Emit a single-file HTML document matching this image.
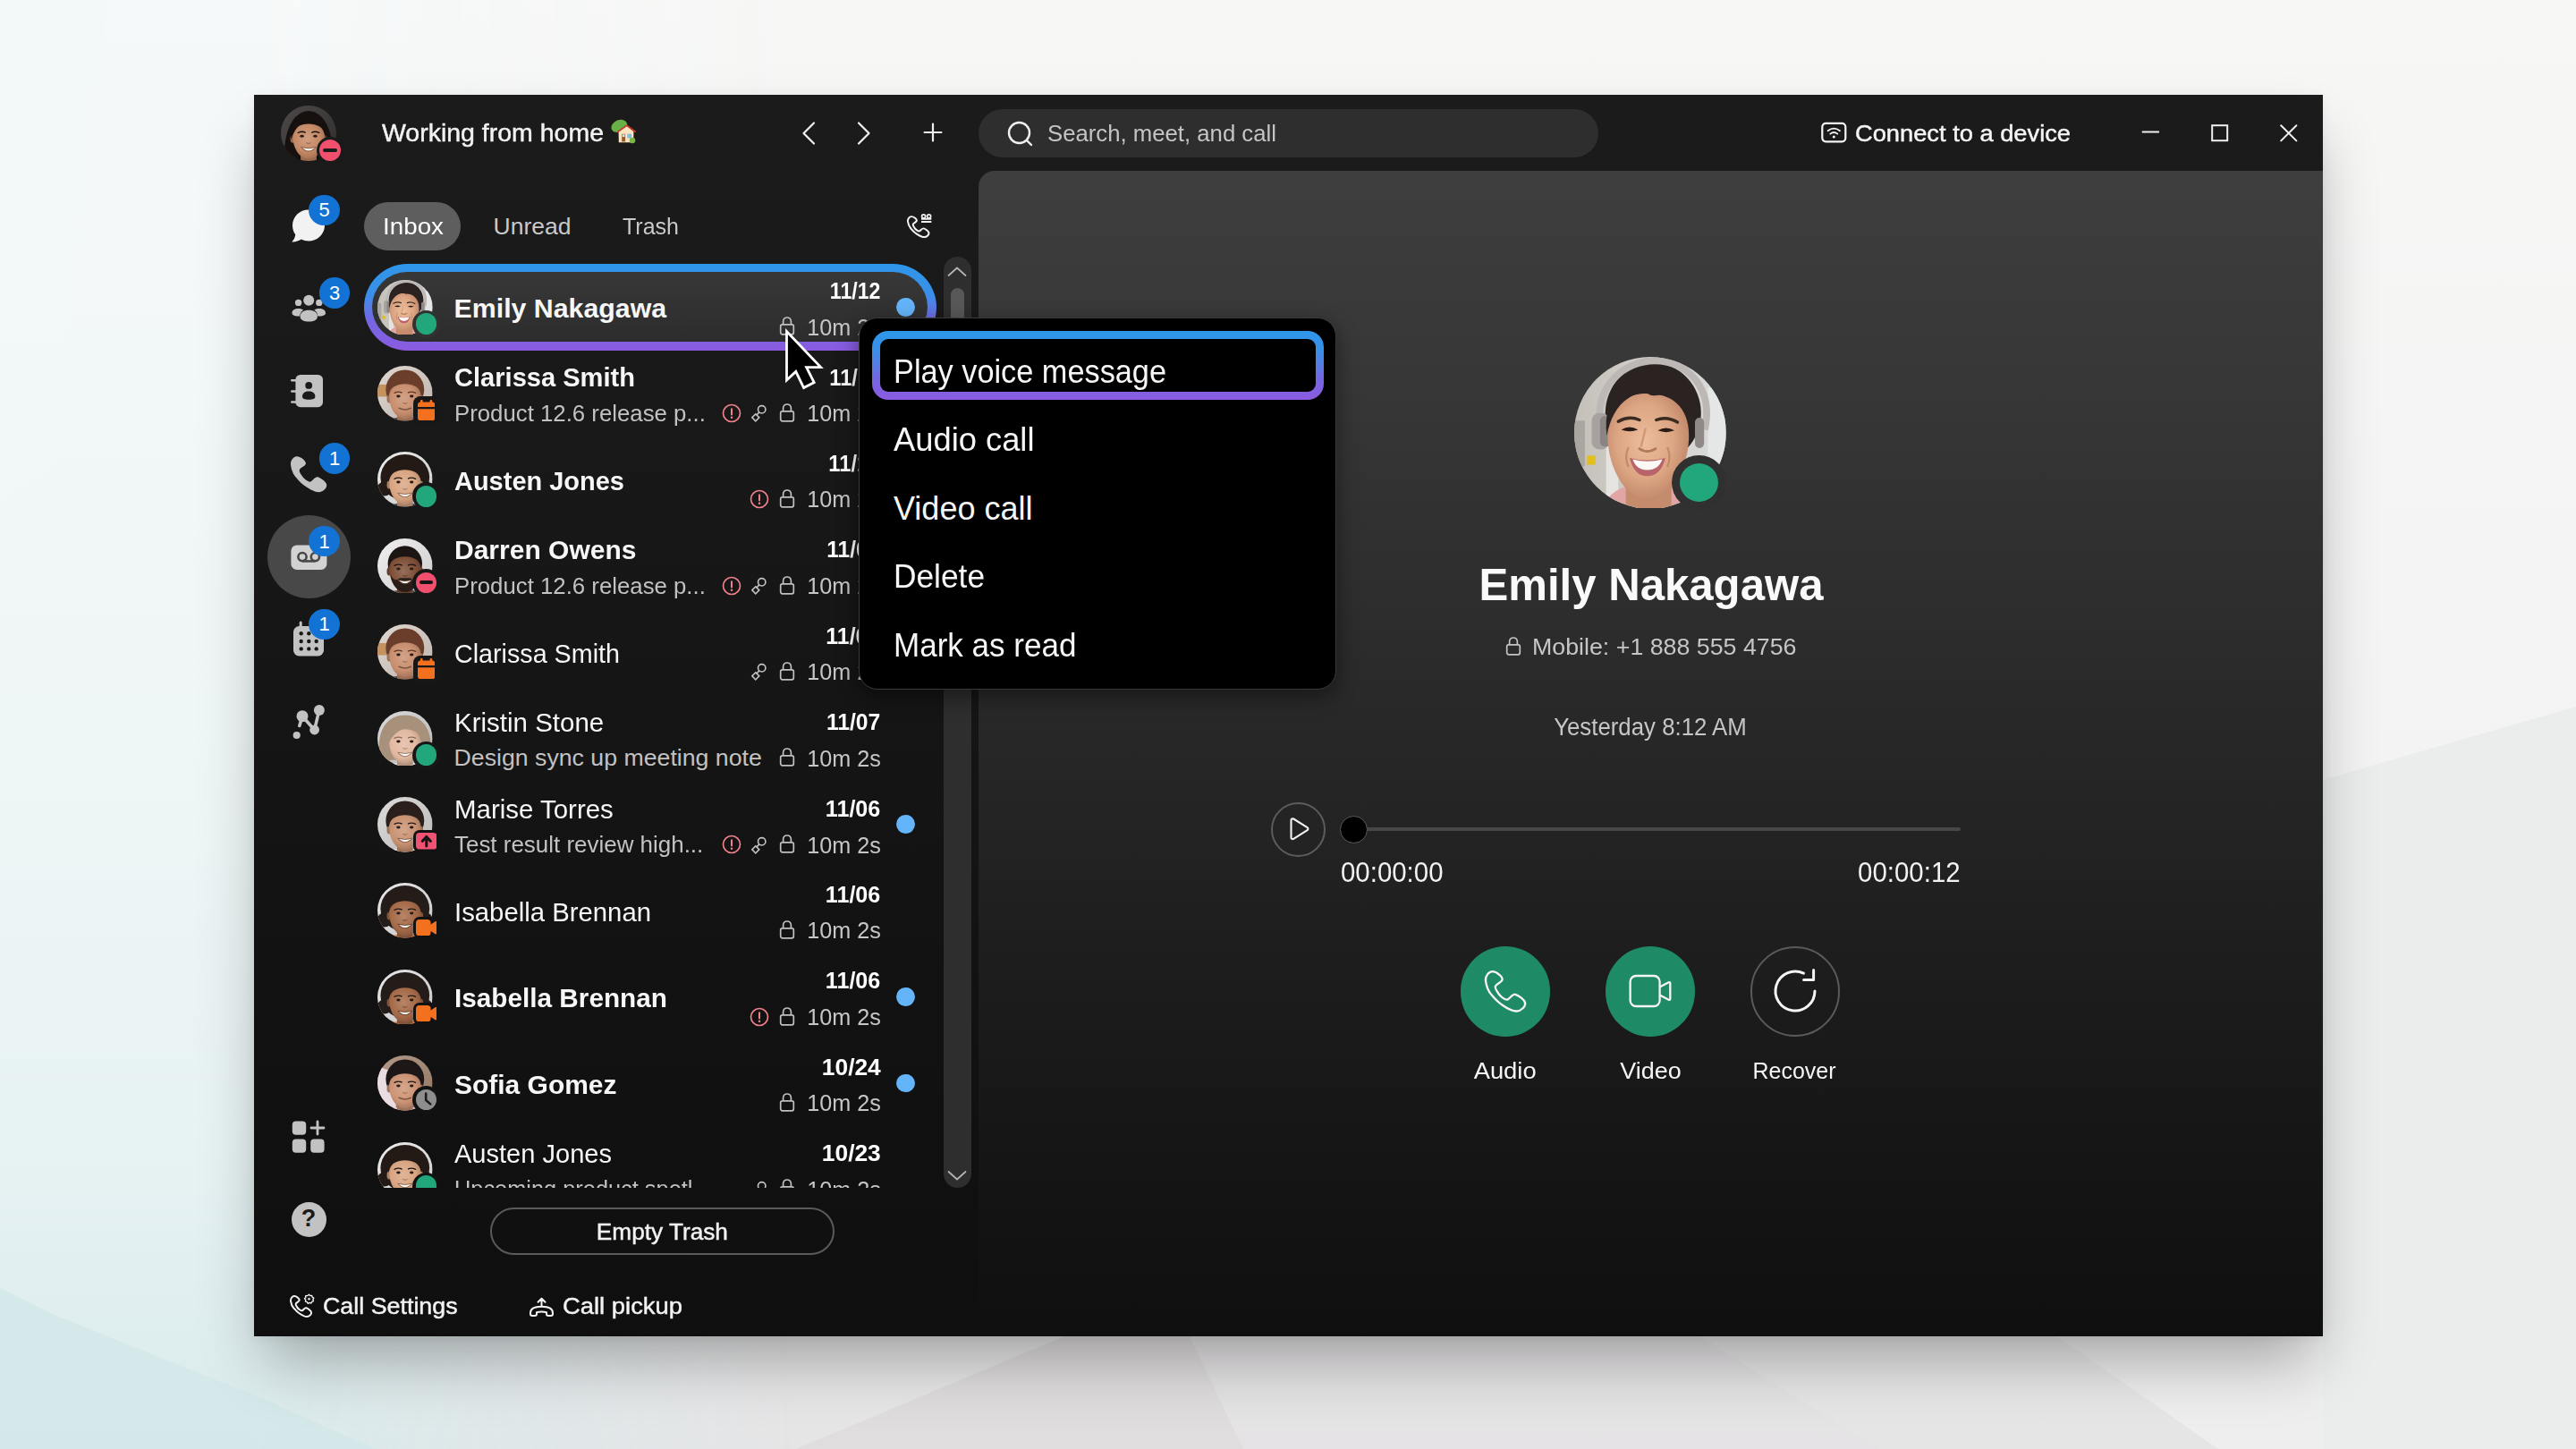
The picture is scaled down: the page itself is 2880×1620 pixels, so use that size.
<!DOCTYPE html>
<html lang="en"><head><meta charset="utf-8"><title>Webex - Voicemail</title>
<style>
html,body{margin:0;padding:0;}
body{width:2880px;height:1620px;overflow:hidden;position:relative;background:#e9eaea;font-family:"Liberation Sans",sans-serif;}
.m{-webkit-text-stroke:.45px currentColor;}
.t{position:absolute;white-space:nowrap;line-height:1;font-family:"Liberation Sans",sans-serif;}
#bg{position:absolute;left:0;top:0;width:2880px;height:1620px;}
#win{position:absolute;left:284px;top:106px;width:2313px;height:1388px;background:linear-gradient(180deg,#1b1b1b 0%,#181818 30%,#121212 70%,#0f0f0f 100%);box-shadow:0 38px 66px -12px rgba(0,0,0,.31),0 2px 12px rgba(0,0,0,.05);}
#root{position:absolute;left:0;top:0;width:2880px;height:1620px;}
</style></head><body>
<svg id="bg" width="2880" height="1620" viewBox="0 0 2880 1620">
<defs>
<linearGradient id="bgv" x1="0" y1="0" x2="0" y2="1"><stop offset="0" stop-color="#f7f7f6"/><stop offset=".55" stop-color="#f3f3f3"/><stop offset=".9" stop-color="#ebeaeb"/><stop offset="1" stop-color="#e6e5e6"/></linearGradient>
<linearGradient id="bglv" x1="0" y1="0" x2="0" y2="1"><stop offset="0" stop-color="#f6f9f9"/><stop offset=".5" stop-color="#eff6f6"/><stop offset=".8" stop-color="#e7f2f3"/><stop offset="1" stop-color="#d9eaec"/></linearGradient>
<linearGradient id="bglm" x1="0" y1="0" x2="1" y2="0"><stop offset="0" stop-color="#fff"/><stop offset=".3" stop-color="#fff"/><stop offset="1" stop-color="#fff" stop-opacity="0"/></linearGradient>
<mask id="mL"><rect x="0" y="0" width="900" height="1620" fill="url(#bglm)"/></mask>
</defs>
<rect width="2880" height="1620" fill="url(#bgv)"/>
<rect x="0" y="0" width="900" height="1620" fill="url(#bglv)" mask="url(#mL)"/>
<polygon points="2597,872 2880,790 2880,1620 2597,1620" fill="#ebecec"/>
<polygon points="2300,1494 2597,1494 2597,1620 2480,1620" fill="#eeeeee"/>
<polygon points="1190,1494 1330,1494 1390,1620 890,1620" fill="#dcdadb" opacity=".75"/>
<polygon points="1330,1494 1900,1494 2100,1620 1390,1620" fill="#e4e2e4" opacity=".7"/>
<polygon points="0,1440 60,1470 284,1560 420,1620 0,1620" fill="#d3e7e9" opacity=".8"/>
<polygon points="0,0 120,0 60,520 0,560" fill="#f2f8f8" opacity=".7"/>
</svg>
<div id="root">
<div id="win"></div>
<svg style="position:absolute;left:314.0px;top:118.0px;" width="62" height="62" viewBox="0 0 100 100" fill="none"><defs><clipPath id="cme"><circle cx="50" cy="50" r="50"/></clipPath><radialGradient id="gme" cx=".45" cy=".42" r=".65"><stop offset="0" stop-color="#d09f81"/><stop offset=".6" stop-color="#c68a66"/><stop offset="1" stop-color="#9a6b4f"/></radialGradient><linearGradient id="bme" x1="0" y1="0" x2="1" y2="1"><stop offset="0" stop-color="#4e4a4a"/><stop offset="1" stop-color="#2e2b2b"/></linearGradient></defs><g clip-path="url(#cme)"><rect width="100" height="100" fill="url(#bme)"/><g transform="translate(50 60) scale(1.2) translate(-50 -52)"><path d="M14 100 C10 60 18 12 50 10 C82 12 90 60 86 100Z" fill="#16110f"/><path d="M4 104 C6 84 26 80 50 80 C74 80 94 84 96 104Z" fill="#0c0c0c"/><path d="M38 66 H62 V84 C56 90 44 90 38 84Z" fill="#9a6b4f"/><ellipse cx="26" cy="52" rx="3.5" ry="6" fill="#9a6b4f"/><ellipse cx="74" cy="52" rx="3.5" ry="6" fill="#9a6b4f"/><path d="M26 46 C26 24 74 24 74 46 C74 66 64 82 50 82 C36 82 26 66 26 46Z" fill="url(#gme)"/><path d="M24 54 C20 24 38 14 50 14 C62 14 80 24 76 54 C74 38 66 26 52 24 C40 26 28 36 24 54Z" fill="#16110f"/><path d="M34 43 Q40 40 45 42.5 M55 42.5 Q60 40 66 43" stroke="#130f0d" stroke-width="1.8" fill="none" stroke-linecap="round"/><ellipse cx="40" cy="48" rx="3" ry="1.9" fill="#2a1c16"/><ellipse cx="60" cy="48" rx="3" ry="1.9" fill="#2a1c16"/><path d="M47 58 Q50 60.5 53 58" stroke="#9a6b4f" stroke-width="1.6" fill="none" stroke-linecap="round"/><path d="M39 64.5 Q50 68 61 64.5 Q50 76 39 64.5Z" fill="#fbf7f4"/><path d="M39 64.5 Q50 68 61 64.5" stroke="#7a553f" stroke-width="1.2" fill="none"/><path d="M39 64.5 Q50 77 61 64.5" stroke="#8a6047" stroke-width="1.5" fill="none"/></g></g></svg>
<div style="position:absolute;left:353.6px;top:153.3px;width:30px;height:30px;border-radius:50%;background:#1a1a1a;"></div>
<div style="position:absolute;left:356.6px;top:156.3px;width:24px;height:24px;border-radius:50%;background:#f0506e;"></div>
<div style="position:absolute;left:360.68px;top:166.26000000000002px;width:15.84px;height:4.08px;border-radius:3px;background:#1a1a1a;"></div>
<span class="t m" style="left:427.0px;top:135.2px;font-size:27.5px;color:#f2f2f2;transform:scaleX(1.0358);transform-origin:0 50%;">Working from home</span>
<svg style="position:absolute;left:682px;top:132px;" width="30" height="30" viewBox="0 0 30 30" fill="none"><ellipse cx="10.3" cy="8.9" rx="9.2" ry="6.6" transform="rotate(-24 10.3 8.9)" fill="#69b049"/><path d="M9.6 15.2 L18.8 8.6 L26.4 15 L26.2 27.2 H9.8Z" fill="#fbe4c0"/><path d="M8.4 15.6 L18.8 8.2 L28.2 15.2" stroke="#c23b2e" stroke-width="1.7" stroke-linecap="round" stroke-linejoin="round"/><rect x="13.2" y="17.8" width="3.9" height="8.6" fill="#9b5a2e"/><rect x="13.8" y="18.3" width="2.7" height="2.7" fill="#cfe6f6"/><rect x="19.4" y="17.6" width="4.7" height="4.9" fill="#7dbde8"/><circle cx="25" cy="25" r="3.3" fill="#7ab648"/></svg>
<svg style="position:absolute;left:889.2px;top:131.5px;" width="34" height="34" viewBox="0 0 34 34" fill="none"><path d="M21 5.5 L9.5 17 L21 28.5" stroke="#f0f0f0" stroke-width="2.2" stroke-linecap="round" stroke-linejoin="round"/></svg>
<svg style="position:absolute;left:947.4px;top:131.5px;" width="34" height="34" viewBox="0 0 34 34" fill="none"><path d="M13 5.5 L24.5 17 L13 28.5" stroke="#f0f0f0" stroke-width="2.2" stroke-linecap="round" stroke-linejoin="round"/></svg>
<svg style="position:absolute;left:1030.2px;top:135.4px;" width="26" height="26" viewBox="0 0 26 26" fill="none"><path d="M13 3.6 V22.4 M3.6 13 H22.4" stroke="#f0f0f0" stroke-width="2.2" stroke-linecap="round"/></svg>
<div style="position:absolute;left:1093.5px;top:122px;width:693.5px;height:53.5px;border-radius:27px;background:#2e2e2e;"></div>
<svg style="position:absolute;left:1125px;top:134px;" width="32" height="32" viewBox="0 0 32 32" fill="none"><circle cx="14.5" cy="14.5" r="11.5" stroke="#f0f0f0" stroke-width="2.4"/><path d="M23 23 L28 28" stroke="#f0f0f0" stroke-width="2.4" stroke-linecap="round"/></svg>
<span class="t" style="left:1171.0px;top:135.8px;font-size:26.3px;color:#c4c4c4;transform:scaleX(0.9783);transform-origin:0 50%;">Search, meet, and call</span>
<svg style="position:absolute;left:2036px;top:136px;" width="30" height="26" viewBox="0 0 30 26" fill="none"><rect x="1.3" y="1.8" width="26" height="20.5" rx="4" stroke="#f5f5f5" stroke-width="2.2"/><circle cx="14.3" cy="17" r="1.5" fill="#f5f5f5"/><path d="M10.3 13.6 Q14.3 10.4 18.3 13.6" stroke="#f5f5f5" stroke-width="1.8" stroke-linecap="round"/><path d="M7.6 10.3 Q14.3 5 21 10.3" stroke="#f5f5f5" stroke-width="1.8" stroke-linecap="round"/></svg>
<span class="t m" style="left:2074.0px;top:135.7px;font-size:26.5px;color:#f5f5f5;transform:scaleX(1.0289);transform-origin:0 50%;">Connect to a device</span>
<svg style="position:absolute;left:2392px;top:136px;" width="24" height="24" viewBox="0 0 24 24" fill="none"><path d="M2.8 11.5 H22" stroke="#f0f0f0" stroke-width="2"/></svg>
<svg style="position:absolute;left:2470px;top:137px;" width="24" height="24" viewBox="0 0 24 24" fill="none"><rect x="3.2" y="3.2" width="17" height="17" stroke="#f0f0f0" stroke-width="2"/></svg>
<svg style="position:absolute;left:2547px;top:137px;" width="24" height="24" viewBox="0 0 24 24" fill="none"><path d="M3.2 3.2 L20.4 20.4 M20.4 3.2 L3.2 20.4" stroke="#f0f0f0" stroke-width="2" stroke-linecap="round"/></svg>
<svg style="position:absolute;left:322px;top:230px;" width="46" height="46" viewBox="0 0 46 46" fill="none"><path d="M23 4.5 C33 4.5 41 12.3 41 22 C41 31.7 33 39.5 23 39.5 C20 39.5 17.2 38.8 14.7 37.6 C12 39.6 8.5 40.6 4.3 40.4 C6.6 38.2 7.8 35.6 8.3 32.3 C6.2 29.4 5 25.8 5 22 C5 12.3 13 4.5 23 4.5Z" fill="#f2f2f2"/></svg>
<div style="position:absolute;left:345.3px;top:217.8px;width:34.6px;height:34.6px;border-radius:50%;background:#1273d4;"></div>
<span class="t" style="left:356.5px;top:224.4px;font-size:22px;color:#fff;">5</span>
<svg style="position:absolute;left:324px;top:326px;" width="44" height="38" viewBox="0 0 44 38" fill="none"><circle cx="21.2" cy="9.7" r="6" fill="#c2c2c2"/><circle cx="9.6" cy="12.4" r="3.7" fill="#c2c2c2"/><circle cx="32.8" cy="12.4" r="3.7" fill="#c2c2c2"/><path d="M2.5 24 C2.5 20.5 5.5 19 9.6 19 C12 19 14 19.6 15.2 20.6 C12.4 22.3 11.4 24.6 11.2 27.6 C6 27.6 2.5 26.6 2.5 24Z" fill="#c2c2c2"/><path d="M40 24 C40 20.5 37 19 32.8 19 C30.4 19 28.4 19.6 27.2 20.6 C30 22.3 31 24.6 31.2 27.6 C36.4 27.6 40 26.6 40 24Z" fill="#c2c2c2"/><path d="M11.6 28 C11.6 23 15.6 20.7 21.2 20.7 C26.8 20.7 30.9 23 30.9 28 C30.9 31.7 26.8 33.5 21.2 33.5 C15.6 33.5 11.6 31.7 11.6 28Z" fill="#c2c2c2"/></svg>
<div style="position:absolute;left:356.9px;top:310.1px;width:34.6px;height:34.6px;border-radius:50%;background:#1273d4;"></div>
<span class="t" style="left:368.1px;top:316.7px;font-size:22px;color:#fff;">3</span>
<svg style="position:absolute;left:324px;top:418px;" width="40" height="40" viewBox="0 0 40 40" fill="none"><rect x="6.4" y="1" width="30.6" height="36.2" rx="5.5" fill="#c2c2c2"/><rect x="1" y="6" width="8" height="2.6" rx="1.3" fill="#c2c2c2"/><rect x="1" y="18.2" width="8" height="2.6" rx="1.3" fill="#c2c2c2"/><rect x="1" y="30.2" width="8" height="2.6" rx="1.3" fill="#c2c2c2"/><circle cx="21.2" cy="12.9" r="3.9" fill="#1a1a1a"/><path d="M14 25.5 C14 21.5 17.2 19.6 21.2 19.6 C25.2 19.6 28.4 21.5 28.4 25.5 C28.4 27.6 25.8 28.7 21.2 28.7 C16.6 28.7 14 27.6 14 25.5Z" fill="#1a1a1a"/></svg>
<svg style="position:absolute;left:325.4px;top:510.0px;overflow:visible;" width="40.1" height="40.3" viewBox="0 0 40.1 40.3" fill="none"><g transform="translate(-3.80,-2.24) scale(0.8833,0.8611)"><path d="M12.2 2.8 C8 2.8 3.6 8 4.3 14 C5.5 22 8 27 11.3 30.5 C15 35 19 39.5 24.4 42.8 C29 46 35 49.6 40.1 49.4 C45 49.2 51 44 49.7 39.3 C49 36 42 30.5 38.4 29.7 C35.5 29 32.5 34 29.6 35.8 C26.5 36.5 21 32 19.1 28.8 C17 25.5 14.5 22.5 15.6 20 C17 17 23 15.5 23.5 12.2 C24 9 17 2.8 12.2 2.8 Z" fill="#c2c2c2"/></g></svg>
<div style="position:absolute;left:356.9px;top:495.0px;width:34.6px;height:34.6px;border-radius:50%;background:#1273d4;"></div>
<span class="t" style="left:368.1px;top:501.6px;font-size:22px;color:#fff;">1</span>
<div style="position:absolute;left:298.8px;top:576px;width:93px;height:93px;border-radius:50%;background:#484848;"></div>
<svg style="position:absolute;left:325px;top:609px;" width="41" height="29" viewBox="0 0 41 29" fill="none"><rect x=".4" y=".4" width="40" height="27.6" rx="6.5" fill="#d2d2d2"/><circle cx="13" cy="13.6" r="4.6" stroke="#484848" stroke-width="2.6"/><circle cx="27.4" cy="13.6" r="4.6" stroke="#484848" stroke-width="2.6"/><path d="M13 18.4 H27.4" stroke="#484848" stroke-width="2.6"/></svg>
<div style="position:absolute;left:345.4px;top:587.9px;width:34.6px;height:34.6px;border-radius:50%;background:#1273d4;"></div>
<span class="t" style="left:356.6px;top:594.5px;font-size:22px;color:#fff;">1</span>
<svg style="position:absolute;left:326px;top:693px;" width="38" height="42" viewBox="0 0 38 42" fill="none"><rect x="2" y="7" width="34" height="33.4" rx="6.5" fill="#c2c2c2"/><rect x="8.7" y="1.6" width="3" height="8" rx="1.5" fill="#c2c2c2"/><circle cx="10.7" cy="15.3" r="2.2" fill="#181818"/><circle cx="10.7" cy="24" r="2.2" fill="#181818"/><circle cx="10.7" cy="32.4" r="2.2" fill="#181818"/><circle cx="19.3" cy="15.3" r="2.2" fill="#181818"/><circle cx="19.3" cy="24" r="2.2" fill="#181818"/><circle cx="19.3" cy="32.4" r="2.2" fill="#181818"/><circle cx="27.7" cy="15.3" r="2.2" fill="#181818"/><circle cx="27.7" cy="24" r="2.2" fill="#181818"/><circle cx="27.7" cy="32.4" r="2.2" fill="#181818"/></svg>
<div style="position:absolute;left:345.4px;top:680.5px;width:34.6px;height:34.6px;border-radius:50%;background:#1273d4;"></div>
<span class="t" style="left:356.6px;top:687.1px;font-size:22px;color:#fff;">1</span>
<svg style="position:absolute;left:324px;top:786px;" width="42" height="42" viewBox="0 0 42 42" fill="none"><path d="M10.8 25.5 L14 14.7 L27.6 30 L32.9 7.9" stroke="#c2c2c2" stroke-width="3.6" stroke-linejoin="round" stroke-linecap="round"/><circle cx="32.9" cy="7.9" r="6" fill="#c2c2c2"/><circle cx="14" cy="14.7" r="6.5" fill="#c2c2c2"/><circle cx="27.6" cy="30" r="5.4" fill="#c2c2c2"/><circle cx="7.7" cy="36" r="4.1" fill="#c2c2c2"/></svg>
<svg style="position:absolute;left:326px;top:1252px;" width="38" height="38" viewBox="0 0 38 38" fill="none"><rect x=".8" y="1.4" width="15.4" height="15.4" rx="4" fill="#c2c2c2"/><rect x=".8" y="21.4" width="15.4" height="15.4" rx="4" fill="#c2c2c2"/><rect x="21.2" y="21.4" width="15.4" height="15.4" rx="4" fill="#c2c2c2"/><path d="M29 2 V16 M22 9 H36" stroke="#c2c2c2" stroke-width="2.8" stroke-linecap="round"/></svg>
<div style="position:absolute;left:325.5px;top:1343.5px;width:39px;height:39px;border-radius:50%;background:#c2c2c2;"></div>
<span class="t" style="left:336.8px;top:1349.1px;font-size:27px;color:#1a1a1a;font-weight:700;">?</span>
<svg style="position:absolute;left:325.1px;top:1448.9px;overflow:visible;" width="23.0" height="23.0" viewBox="0 0 23.0 23.0" fill="none"><g transform="translate(-2.18,-1.28) scale(0.5066,0.4915)"><path d="M12.2 2.8 C8 2.8 3.6 8 4.3 14 C5.5 22 8 27 11.3 30.5 C15 35 19 39.5 24.4 42.8 C29 46 35 49.6 40.1 49.4 C45 49.2 51 44 49.7 39.3 C49 36 42 30.5 38.4 29.7 C35.5 29 32.5 34 29.6 35.8 C26.5 36.5 21 32 19.1 28.8 C17 25.5 14.5 22.5 15.6 20 C17 17 23 15.5 23.5 12.2 C24 9 17 2.8 12.2 2.8 Z" stroke="#f2f2f2" stroke-width="4.01" stroke-linejoin="round"/></g></svg>
<svg style="position:absolute;left:339.1px;top:1445.5px;" width="13" height="13" viewBox="0 0 16 16" fill="none"><path d="M8 1.6 L9.6 3.3 L11.9 2.9 L12.4 5.2 L14.5 6.3 L13.4 8.4 L14.1 10.7 L11.9 11.5 L10.9 13.6 L8.7 12.8 L6.5 13.9 L5.3 11.8 L3 11.3 L3.4 9 L1.8 7.2 L3.5 5.6 L3.4 3.3 L5.7 3.3 Z" fill="#111" stroke="#f2f2f2" stroke-width="1.7" stroke-linejoin="round"/><circle cx="8" cy="7.8" r="1.5" fill="#f2f2f2"/></svg>
<span class="t m" style="left:361.2px;top:1446.8px;font-size:26.5px;color:#f2f2f2;transform:scaleX(1.0123);transform-origin:0 50%;">Call Settings</span>
<svg style="position:absolute;left:590.8px;top:1449px;" width="29" height="24" viewBox="0 0 29 24" fill="none"><path d="M14.5 11.5 V3.2 M10.5 6.8 L14.5 2.8 L18.5 6.8" stroke="#f2f2f2" stroke-width="2" stroke-linecap="round" stroke-linejoin="round"/><path d="M2 19 C2 13.6 8 11.8 14.5 11.8 C21 11.8 27 13.6 27 19 V20 C27 21.2 26.2 22 25 22 H22 C20.8 22 20 21.2 20 20 V18.2 C16.5 17.2 12.5 17.2 9 18.2 V20 C9 21.2 8.2 22 7 22 H4 C2.8 22 2 21.2 2 20 Z" stroke="#f2f2f2" stroke-width="2" stroke-linejoin="round"/></svg>
<span class="t m" style="left:628.7px;top:1446.8px;font-size:26.5px;color:#f2f2f2;transform:scaleX(1.0338);transform-origin:0 50%;">Call pickup</span>
<div style="position:absolute;left:548px;top:1350px;width:384.5px;height:53px;box-sizing:border-box;border:2px solid #5a5a5a;border-radius:27px;"></div>
<span class="t m" style="left:665.9px;top:1364.0px;font-size:26.5px;color:#f2f2f2;transform:scaleX(0.9883);transform-origin:50% 50%;">Empty Trash</span>
<div style="position:absolute;left:407px;top:225.8px;width:108px;height:54px;border-radius:27px;background:#5e5e5e;"></div>
<span class="t" style="left:427.5px;top:239.9px;font-size:26.5px;color:#fff;transform:scaleX(1.0489);transform-origin:0 50%;">Inbox</span>
<span class="t" style="left:551.6px;top:239.9px;font-size:26.5px;color:#c9c9c9;">Unread</span>
<span class="t" style="left:695.5px;top:239.9px;font-size:26.5px;color:#c9c9c9;transform:scaleX(0.9437);transform-origin:0 50%;">Trash</span>
<svg style="position:absolute;left:1015.1px;top:241.9px;overflow:visible;" width="23.4" height="23.1" viewBox="0 0 23.4 23.1" fill="none"><g transform="translate(-2.22,-1.28) scale(0.5154,0.4936)"><path d="M12.2 2.8 C8 2.8 3.6 8 4.3 14 C5.5 22 8 27 11.3 30.5 C15 35 19 39.5 24.4 42.8 C29 46 35 49.6 40.1 49.4 C45 49.2 51 44 49.7 39.3 C49 36 42 30.5 38.4 29.7 C35.5 29 32.5 34 29.6 35.8 C26.5 36.5 21 32 19.1 28.8 C17 25.5 14.5 22.5 15.6 20 C17 17 23 15.5 23.5 12.2 C24 9 17 2.8 12.2 2.8 Z" stroke="#f2f2f2" stroke-width="3.96" stroke-linejoin="round"/></g></svg>
<svg style="position:absolute;left:1028px;top:237px;" width="16" height="14" viewBox="0 0 16 14" fill="none"><circle cx="4.6" cy="4.9" r="2" stroke="#f2f2f2" stroke-width="1.7"/><circle cx="10.6" cy="4.9" r="2" stroke="#f2f2f2" stroke-width="1.7"/><path d="M2 7.8 H13.3 M2 11 H13.3" stroke="#f2f2f2" stroke-width="1.8"/></svg>
<div style="position:absolute;left:1054.8px;top:287px;width:31.2px;height:1041px;border-radius:15.6px;background:#2e2e2e;"></div>
<div style="position:absolute;left:1062.6px;top:321.7px;width:15.6px;height:400px;border-radius:7.8px;background:#585858;"></div>
<svg style="position:absolute;left:1058px;top:296px;" width="24" height="16" viewBox="0 0 24 16" fill="none"><path d="M2.5 12 L12 3.5 L21.5 12" stroke="#b5b5b5" stroke-width="1.7" stroke-linecap="round" stroke-linejoin="round"/></svg>
<svg style="position:absolute;left:1058px;top:1306px;" width="24" height="16" viewBox="0 0 24 16" fill="none"><path d="M2.5 4 L12 12.5 L21.5 4" stroke="#b5b5b5" stroke-width="1.7" stroke-linecap="round" stroke-linejoin="round"/></svg>
<div style="position:absolute;left:400px;top:287px;width:654px;height:1041px;overflow:hidden;"><div style="position:absolute;left:-400px;top:-287px;width:2880px;height:1620px;">
<div style="position:absolute;left:407px;top:294.7px;width:639.5px;height:96.9px;border-radius:48.5px;background:linear-gradient(180deg,#2e97ea 0%,#3a8fe8 35%,#7467e3 65%,#8b5be0 100%);"></div>
<div style="position:absolute;left:416.2px;top:303.9px;width:621.1px;height:78.4px;border-radius:39.2px;background:linear-gradient(180deg,#383838 0%,#2c2c2c 100%);"></div>
<svg style="position:absolute;left:422.4px;top:312.6px;" width="61.6" height="61.6" viewBox="0 0 100 100" fill="none"><defs><clipPath id="cr0"><circle cx="50" cy="50" r="50"/></clipPath><radialGradient id="gr0" cx=".46" cy=".45" r=".62"><stop offset="0" stop-color="#ecbd9c"/><stop offset=".55" stop-color="#dda684"/><stop offset="1" stop-color="#b98063"/></radialGradient><linearGradient id="br0" x1="0" y1="0" x2="1" y2="0"><stop offset="0" stop-color="#c4c0b9"/><stop offset=".45" stop-color="#d2cfca"/><stop offset="1" stop-color="#d9dcda"/></linearGradient></defs><g clip-path="url(#cr0)"><rect width="100" height="100" fill="url(#br0)"/><rect x="21" y="58" width="8" height="42" fill="#e6e4e0"/><rect x="8.5" y="65" width="5.5" height="6" fill="#e3bf1c"/><rect x="0" y="42" width="7" height="30" fill="#a9a6a0"/><rect x="88" y="20" width="12" height="60" fill="#e4e7e6"/><ellipse cx="52" cy="37" rx="31.5" ry="33" fill="#2b2321"/><path d="M17 47 C13 18 34 2.5 53 2.5 C74 2.5 92 20 86 48" fill="none" stroke="#bdb8b5" stroke-width="4.6"/><rect x="11.5" y="37" width="11.5" height="24" rx="5" fill="#a7a29f"/><rect x="17" y="39" width="7" height="20" rx="3" fill="#8a8583"/><rect x="79.5" y="40" width="6" height="20" rx="3" fill="#8f8a88"/><path d="M18 104 C20 90 30 85 42 84 L70 86 C84 88 90 94 92 104Z" fill="#e2a5a6"/><path d="M34 80 H64 V100 H34Z" fill="#c48b6c"/><path d="M22 52 C22 32 34 24 48 24 C63 24 75.5 32 75.5 52 C75.5 74 62 94.5 48.5 94.5 C35 94.5 22 74 22 52Z" fill="url(#gr0)"/><path d="M21.5 52 C18 24 36 7 52 7 C69 7 83 22 77.5 52 C76.5 41 71 31 63 26.5 C57 23.5 51 27 49 24.5 C45 23 40 24 36 27 C28 32 23.5 41 21.5 52Z" fill="#2b2321"/><path d="M29 42.5 Q36 38.5 43 41.5 M54 41.5 Q61 38.8 68 43" stroke="#3a2a22" stroke-width="2" fill="none" stroke-linecap="round"/><path d="M31 48 Q36.5 44.6 42 48 Q36.5 50 31 48Z" fill="#2a1b15"/><path d="M55 48.5 Q60.5 45 66 48.5 Q60.5 50.6 55 48.5Z" fill="#2a1b15"/><path d="M43 60.5 Q48 64 53.5 60.5" stroke="#b37a5c" stroke-width="1.8" fill="none" stroke-linecap="round"/><path d="M47 47 Q45 55 44 59" stroke="#cf9776" stroke-width="1.4" fill="none"/><path d="M35.5 60 Q33 66 35.5 72 M61.5 60 Q64 66 61.5 72" stroke="#c08a6b" stroke-width="1.3" fill="none" stroke-linecap="round"/><path d="M36.5 66.5 Q48 69.5 60 66.5 Q57 78.5 48 78.5 Q39.5 78.5 36.5 66.5Z" fill="#b9646a"/><path d="M38.5 67.4 Q48 70 58 67.4 Q55.5 74.5 48 74.5 Q41 74.5 38.5 67.4Z" fill="#fbf8f5"/></g></svg>
<div style="position:absolute;left:461.0px;top:346.6px;width:31px;height:31px;border-radius:50%;background:#323232;"></div>
<div style="position:absolute;left:464.7px;top:350.3px;width:23.6px;height:23.6px;border-radius:50%;background:#22a67b;"></div>
<span class="t" style="left:507.6px;top:330.2px;font-size:30.3px;color:#f7f7f7;font-weight:700;">Emily Nakagawa</span>
<span class="t" style="left:919.0px;top:312.1px;font-size:26.7px;color:#fff;font-weight:700;transform:scaleX(0.8647);transform-origin:100% 50%;">11/12</span>
<span class="t" style="left:897.6px;top:352.5px;font-size:26.5px;color:#c6c6c6;transform:scaleX(0.9516);transform-origin:100% 50%;">10m 2s</span>
<svg style="position:absolute;left:871.1px;top:353.40000000000003px;" width="18" height="23" viewBox="0 0 18 23" fill="none"><rect x="1.7" y="9.8" width="14.6" height="11" rx="2" stroke="#c0c0c0" stroke-width="1.7"/><path d="M4.6 9.8 V6.4 C4.6 3.8 6.5 2 9 2 C11.5 2 13.4 3.8 13.4 6.4 V9.8" stroke="#c0c0c0" stroke-width="1.7"/></svg>
<div style="position:absolute;left:1001.9px;top:332.90000000000003px;width:20.8px;height:20.8px;border-radius:50%;background:#64b4fa;"></div>
<svg style="position:absolute;left:422.4px;top:409.0px;" width="61.6" height="61.6" viewBox="0 0 100 100" fill="none"><defs><clipPath id="cr1"><circle cx="50" cy="50" r="50"/></clipPath><radialGradient id="gr1" cx=".45" cy=".42" r=".65"><stop offset="0" stop-color="#d2a388"/><stop offset=".6" stop-color="#c98f6f"/><stop offset="1" stop-color="#9c6f56"/></radialGradient><linearGradient id="br1" x1="0" y1="0" x2="1" y2="1"><stop offset="0" stop-color="#e0d8d0"/><stop offset="1" stop-color="#bdb5ad"/></linearGradient></defs><g clip-path="url(#cr1)"><rect width="100" height="100" fill="url(#br1)"/><rect x="0" y="34" width="30" height="22" fill="#c4925f"/><g transform="translate(50 60) scale(1.2) translate(-50 -52)"><ellipse cx="50" cy="38" rx="29" ry="30" fill="#6a3e2b"/><path d="M4 104 C6 84 26 80 50 80 C74 80 94 84 96 104Z" fill="#3d3a55"/><path d="M38 66 H62 V84 C56 90 44 90 38 84Z" fill="#9c6f56"/><ellipse cx="26" cy="52" rx="3.5" ry="6" fill="#9c6f56"/><ellipse cx="74" cy="52" rx="3.5" ry="6" fill="#9c6f56"/><path d="M26 46 C26 24 74 24 74 46 C74 66 64 82 50 82 C36 82 26 66 26 46Z" fill="url(#gr1)"/><path d="M25 48 C21 22 38 12 50 12 C62 12 79 22 75 48 C72 32 62 26 50 26 C38 26 28 32 25 48Z" fill="#6a3e2b"/><path d="M34 43 Q40 40 45 42.5 M55 42.5 Q60 40 66 43" stroke="#5f3726" stroke-width="1.8" fill="none" stroke-linecap="round"/><ellipse cx="40" cy="48" rx="3" ry="1.9" fill="#2a1c16"/><ellipse cx="60" cy="48" rx="3" ry="1.9" fill="#2a1c16"/><path d="M47 58 Q50 60.5 53 58" stroke="#9c6f56" stroke-width="1.6" fill="none" stroke-linecap="round"/><path d="M41 66 Q50 70.5 59 66" stroke="#785542" stroke-width="2.2" fill="none" stroke-linecap="round"/></g></g></svg>
<div style="position:absolute;left:461.9px;top:443.3px;width:30px;height:31px;border-radius:8px;background:#171717;"></div>
<svg style="position:absolute;left:466.7px;top:446.7px;" width="19.6" height="23.6" viewBox="0 0 19.6 23.6" fill="none"><rect x="3" y="0" width="2.6" height="5" rx="1" fill="#f3701f"/><rect x="13.6" y="0" width="2.6" height="5" rx="1" fill="#f3701f"/><path d="M0 5.6 C0 3.6 1.4 2.4 3.2 2.4 H16.2 C18 2.4 19.4 3.6 19.4 5.6 V8 H0Z" fill="#f3701f"/><path d="M0 10.2 H19.4 V20 C19.4 22 18 23.4 16 23.4 H3.4 C1.4 23.4 0 22 0 20Z" fill="#f3701f"/></svg>
<span class="t" style="left:507.6px;top:407.3px;font-size:30.3px;color:#f7f7f7;font-weight:700;transform:scaleX(0.9596);transform-origin:0 50%;">Clarissa Smith</span>
<span class="t" style="left:507.6px;top:448.7px;font-size:26.7px;color:#c2c2c2;transform:scaleX(0.9659);transform-origin:0 50%;">Product 12.6 release p...</span>
<span class="t" style="left:920.4px;top:408.5px;font-size:26.7px;color:#fff;font-weight:700;transform:scaleX(0.8846);transform-origin:100% 50%;">11/11</span>
<span class="t" style="left:897.6px;top:448.9px;font-size:26.5px;color:#c6c6c6;transform:scaleX(0.9516);transform-origin:100% 50%;">10m 2s</span>
<svg style="position:absolute;left:871.1px;top:449.8px;" width="18" height="23" viewBox="0 0 18 23" fill="none"><rect x="1.7" y="9.8" width="14.6" height="11" rx="2" stroke="#c0c0c0" stroke-width="1.7"/><path d="M4.6 9.8 V6.4 C4.6 3.8 6.5 2 9 2 C11.5 2 13.4 3.8 13.4 6.4 V9.8" stroke="#c0c0c0" stroke-width="1.7"/></svg>
<svg style="position:absolute;left:838.6px;top:451.1px;" width="20" height="22" viewBox="0 0 20 22" fill="none"><circle cx="12.7" cy="6.8" r="4.2" stroke="#c4c4c4" stroke-width="1.6"/><path d="M9.8 9.9 L7 13" stroke="#c4c4c4" stroke-width="1.6"/><rect x="3" y="13" width="5.6" height="5.6" transform="rotate(45 5.8 15.8)" stroke="#c4c4c4" stroke-width="1.6"/></svg>
<svg style="position:absolute;left:806.9px;top:450.8px;" width="22" height="22" viewBox="0 0 22 22" fill="none"><circle cx="11" cy="11" r="9.5" stroke="#f0808c" stroke-width="1.7"/><path d="M11 6.2 V12.6" stroke="#f0808c" stroke-width="2" stroke-linecap="round"/><circle cx="11" cy="15.8" r="1.25" fill="#f0808c"/></svg>
<svg style="position:absolute;left:422.4px;top:505.4px;" width="61.6" height="61.6" viewBox="0 0 100 100" fill="none"><defs><clipPath id="cr2"><circle cx="50" cy="50" r="50"/></clipPath><radialGradient id="gr2" cx=".45" cy=".42" r=".65"><stop offset="0" stop-color="#dfb598"/><stop offset=".6" stop-color="#d9a582"/><stop offset="1" stop-color="#a98065"/></radialGradient><linearGradient id="br2" x1="0" y1="0" x2="1" y2="1"><stop offset="0" stop-color="#ededed"/><stop offset="1" stop-color="#cacaca"/></linearGradient></defs><g clip-path="url(#cr2)"><rect width="100" height="100" fill="url(#br2)"/><g transform="translate(50 60) scale(1.2) translate(-50 -52)"><ellipse cx="50" cy="41" rx="37" ry="35" fill="#231a15"/><circle cx="19" cy="58" r="11" fill="#231a15"/><circle cx="81" cy="58" r="11" fill="#231a15"/><path d="M4 104 C6 84 26 80 50 80 C74 80 94 84 96 104Z" fill="#2f3d55"/><path d="M38 66 H62 V84 C56 90 44 90 38 84Z" fill="#a98065"/><ellipse cx="26" cy="52" rx="3.5" ry="6" fill="#a98065"/><ellipse cx="74" cy="52" rx="3.5" ry="6" fill="#a98065"/><path d="M26 46 C26 24 74 24 74 46 C74 66 64 82 50 82 C36 82 26 66 26 46Z" fill="url(#gr2)"/><path d="M25 48 C22 24 38 16 50 16 C62 16 78 24 75 48 C72 34 62 27 50 27 C38 27 28 34 25 48Z" fill="#231a15"/><path d="M34 43 Q40 40 45 42.5 M55 42.5 Q60 40 66 43" stroke="#1f1712" stroke-width="1.8" fill="none" stroke-linecap="round"/><ellipse cx="40" cy="48" rx="3" ry="1.9" fill="#2a1c16"/><ellipse cx="60" cy="48" rx="3" ry="1.9" fill="#2a1c16"/><path d="M47 58 Q50 60.5 53 58" stroke="#a98065" stroke-width="1.6" fill="none" stroke-linecap="round"/><path d="M39 64.5 Q50 68 61 64.5 Q50 76 39 64.5Z" fill="#fbf7f4"/><path d="M39 64.5 Q50 68 61 64.5" stroke="#866650" stroke-width="1.2" fill="none"/><path d="M39 64.5 Q50 77 61 64.5" stroke="#97735b" stroke-width="1.5" fill="none"/></g></g></svg>
<div style="position:absolute;left:461.0px;top:539.4000000000001px;width:31px;height:31px;border-radius:50%;background:#171717;"></div>
<div style="position:absolute;left:464.7px;top:543.1000000000001px;width:23.6px;height:23.6px;border-radius:50%;background:#22a67b;"></div>
<span class="t" style="left:507.6px;top:523.0px;font-size:30.3px;color:#f7f7f7;font-weight:700;transform:scaleX(0.9563);transform-origin:0 50%;">Austen Jones</span>
<span class="t" style="left:919.0px;top:504.9px;font-size:26.7px;color:#fff;font-weight:700;transform:scaleX(0.8876);transform-origin:100% 50%;">11/10</span>
<span class="t" style="left:897.6px;top:545.3px;font-size:26.5px;color:#c6c6c6;transform:scaleX(0.9516);transform-origin:100% 50%;">10m 2s</span>
<svg style="position:absolute;left:871.1px;top:546.2px;" width="18" height="23" viewBox="0 0 18 23" fill="none"><rect x="1.7" y="9.8" width="14.6" height="11" rx="2" stroke="#c0c0c0" stroke-width="1.7"/><path d="M4.6 9.8 V6.4 C4.6 3.8 6.5 2 9 2 C11.5 2 13.4 3.8 13.4 6.4 V9.8" stroke="#c0c0c0" stroke-width="1.7"/></svg>
<svg style="position:absolute;left:837.6px;top:547.2px;" width="22" height="22" viewBox="0 0 22 22" fill="none"><circle cx="11" cy="11" r="9.5" stroke="#f0808c" stroke-width="1.7"/><path d="M11 6.2 V12.6" stroke="#f0808c" stroke-width="2" stroke-linecap="round"/><circle cx="11" cy="15.8" r="1.25" fill="#f0808c"/></svg>
<svg style="position:absolute;left:422.4px;top:601.8px;" width="61.6" height="61.6" viewBox="0 0 100 100" fill="none"><defs><clipPath id="cr3"><circle cx="50" cy="50" r="50"/></clipPath><radialGradient id="gr3" cx=".45" cy=".42" r=".65"><stop offset="0" stop-color="#966e5b"/><stop offset=".6" stop-color="#7f4f38"/><stop offset="1" stop-color="#633d2b"/></radialGradient><linearGradient id="br3" x1="0" y1="0" x2="1" y2="1"><stop offset="0" stop-color="#f0f0f0"/><stop offset="1" stop-color="#cccccc"/></linearGradient></defs><g clip-path="url(#cr3)"><rect width="100" height="100" fill="url(#br3)"/><g transform="translate(50 60) scale(1.2) translate(-50 -52)"><ellipse cx="50" cy="40" rx="26" ry="27" fill="#1b1513"/><path d="M4 104 C6 84 26 80 50 80 C74 80 94 84 96 104Z" fill="#4a4a4c"/><path d="M38 66 H62 V84 C56 90 44 90 38 84Z" fill="#633d2b"/><ellipse cx="26" cy="52" rx="3.5" ry="6" fill="#633d2b"/><ellipse cx="74" cy="52" rx="3.5" ry="6" fill="#633d2b"/><path d="M26 46 C26 24 74 24 74 46 C74 66 64 82 50 82 C36 82 26 66 26 46Z" fill="url(#gr3)"/><path d="M28 56 C30 74 40 83 50 83 C60 83 70 74 72 56 C68 66 62 66 58 62 H42 C38 66 32 66 28 56Z" fill="#1b1513" opacity=".85"/><path d="M25.5 46 C23 24 38 17 50 17 C62 17 77 24 74.5 46 C72 33 62 28 50 28 C38 28 28 33 25.5 46Z" fill="#1b1513"/><path d="M34 43 Q40 40 45 42.5 M55 42.5 Q60 40 66 43" stroke="#181211" stroke-width="1.8" fill="none" stroke-linecap="round"/><ellipse cx="40" cy="48" rx="3" ry="1.9" fill="#2a1c16"/><ellipse cx="60" cy="48" rx="3" ry="1.9" fill="#2a1c16"/><path d="M47 58 Q50 60.5 53 58" stroke="#633d2b" stroke-width="1.6" fill="none" stroke-linecap="round"/><path d="M39 64.5 Q50 68 61 64.5 Q50 76 39 64.5Z" fill="#fbf7f4"/><path d="M39 64.5 Q50 68 61 64.5" stroke="#4e3022" stroke-width="1.2" fill="none"/><path d="M39 64.5 Q50 77 61 64.5" stroke="#583727" stroke-width="1.5" fill="none"/></g></g></svg>
<div style="position:absolute;left:461.0px;top:635.8000000000001px;width:31px;height:31px;border-radius:50%;background:#171717;"></div>
<div style="position:absolute;left:464.7px;top:639.5000000000001px;width:23.6px;height:23.6px;border-radius:50%;background:#f0506e;"></div>
<div style="position:absolute;left:468.9px;top:649.3000000000001px;width:15.2px;height:4px;border-radius:2px;background:#151515;"></div>
<span class="t" style="left:507.6px;top:600.1px;font-size:30.3px;color:#f7f7f7;font-weight:700;transform:scaleX(0.9905);transform-origin:0 50%;">Darren Owens</span>
<span class="t" style="left:507.6px;top:641.5px;font-size:26.7px;color:#c2c2c2;transform:scaleX(0.9659);transform-origin:0 50%;">Product 12.6 release p...</span>
<span class="t" style="left:919.0px;top:601.3px;font-size:26.7px;color:#fff;font-weight:700;transform:scaleX(0.9182);transform-origin:100% 50%;">11/09</span>
<span class="t" style="left:897.6px;top:641.7px;font-size:26.5px;color:#c6c6c6;transform:scaleX(0.9516);transform-origin:100% 50%;">10m 2s</span>
<svg style="position:absolute;left:871.1px;top:642.6px;" width="18" height="23" viewBox="0 0 18 23" fill="none"><rect x="1.7" y="9.8" width="14.6" height="11" rx="2" stroke="#c0c0c0" stroke-width="1.7"/><path d="M4.6 9.8 V6.4 C4.6 3.8 6.5 2 9 2 C11.5 2 13.4 3.8 13.4 6.4 V9.8" stroke="#c0c0c0" stroke-width="1.7"/></svg>
<svg style="position:absolute;left:838.6px;top:643.9000000000001px;" width="20" height="22" viewBox="0 0 20 22" fill="none"><circle cx="12.7" cy="6.8" r="4.2" stroke="#c4c4c4" stroke-width="1.6"/><path d="M9.8 9.9 L7 13" stroke="#c4c4c4" stroke-width="1.6"/><rect x="3" y="13" width="5.6" height="5.6" transform="rotate(45 5.8 15.8)" stroke="#c4c4c4" stroke-width="1.6"/></svg>
<svg style="position:absolute;left:806.9px;top:643.6px;" width="22" height="22" viewBox="0 0 22 22" fill="none"><circle cx="11" cy="11" r="9.5" stroke="#f0808c" stroke-width="1.7"/><path d="M11 6.2 V12.6" stroke="#f0808c" stroke-width="2" stroke-linecap="round"/><circle cx="11" cy="15.8" r="1.25" fill="#f0808c"/></svg>
<svg style="position:absolute;left:422.4px;top:698.2px;" width="61.6" height="61.6" viewBox="0 0 100 100" fill="none"><defs><clipPath id="cr4"><circle cx="50" cy="50" r="50"/></clipPath><radialGradient id="gr4" cx=".45" cy=".42" r=".65"><stop offset="0" stop-color="#d2a388"/><stop offset=".6" stop-color="#c98f6f"/><stop offset="1" stop-color="#9c6f56"/></radialGradient><linearGradient id="br4" x1="0" y1="0" x2="1" y2="1"><stop offset="0" stop-color="#e0d8d0"/><stop offset="1" stop-color="#bdb5ad"/></linearGradient></defs><g clip-path="url(#cr4)"><rect width="100" height="100" fill="url(#br4)"/><rect x="0" y="34" width="30" height="22" fill="#c4925f"/><g transform="translate(50 60) scale(1.2) translate(-50 -52)"><ellipse cx="50" cy="38" rx="29" ry="30" fill="#6a3e2b"/><path d="M4 104 C6 84 26 80 50 80 C74 80 94 84 96 104Z" fill="#3d3a55"/><path d="M38 66 H62 V84 C56 90 44 90 38 84Z" fill="#9c6f56"/><ellipse cx="26" cy="52" rx="3.5" ry="6" fill="#9c6f56"/><ellipse cx="74" cy="52" rx="3.5" ry="6" fill="#9c6f56"/><path d="M26 46 C26 24 74 24 74 46 C74 66 64 82 50 82 C36 82 26 66 26 46Z" fill="url(#gr4)"/><path d="M25 48 C21 22 38 12 50 12 C62 12 79 22 75 48 C72 32 62 26 50 26 C38 26 28 32 25 48Z" fill="#6a3e2b"/><path d="M34 43 Q40 40 45 42.5 M55 42.5 Q60 40 66 43" stroke="#5f3726" stroke-width="1.8" fill="none" stroke-linecap="round"/><ellipse cx="40" cy="48" rx="3" ry="1.9" fill="#2a1c16"/><ellipse cx="60" cy="48" rx="3" ry="1.9" fill="#2a1c16"/><path d="M47 58 Q50 60.5 53 58" stroke="#9c6f56" stroke-width="1.6" fill="none" stroke-linecap="round"/><path d="M41 66 Q50 70.5 59 66" stroke="#785542" stroke-width="2.2" fill="none" stroke-linecap="round"/></g></g></svg>
<div style="position:absolute;left:461.9px;top:732.5px;width:30px;height:31px;border-radius:8px;background:#171717;"></div>
<svg style="position:absolute;left:466.7px;top:735.9000000000001px;" width="19.6" height="23.6" viewBox="0 0 19.6 23.6" fill="none"><rect x="3" y="0" width="2.6" height="5" rx="1" fill="#f3701f"/><rect x="13.6" y="0" width="2.6" height="5" rx="1" fill="#f3701f"/><path d="M0 5.6 C0 3.6 1.4 2.4 3.2 2.4 H16.2 C18 2.4 19.4 3.6 19.4 5.6 V8 H0Z" fill="#f3701f"/><path d="M0 10.2 H19.4 V20 C19.4 22 18 23.4 16 23.4 H3.4 C1.4 23.4 0 22 0 20Z" fill="#f3701f"/></svg>
<span class="t" style="left:507.6px;top:715.8px;font-size:30.3px;color:#f7f7f7;transform:scaleX(0.9472);transform-origin:0 50%;">Clarissa Smith</span>
<span class="t" style="left:919.0px;top:697.7px;font-size:26.7px;color:#fff;font-weight:700;transform:scaleX(0.9335);transform-origin:100% 50%;">11/08</span>
<span class="t" style="left:897.6px;top:738.1px;font-size:26.5px;color:#c6c6c6;transform:scaleX(0.9516);transform-origin:100% 50%;">10m 2s</span>
<svg style="position:absolute;left:871.1px;top:739.0px;" width="18" height="23" viewBox="0 0 18 23" fill="none"><rect x="1.7" y="9.8" width="14.6" height="11" rx="2" stroke="#c0c0c0" stroke-width="1.7"/><path d="M4.6 9.8 V6.4 C4.6 3.8 6.5 2 9 2 C11.5 2 13.4 3.8 13.4 6.4 V9.8" stroke="#c0c0c0" stroke-width="1.7"/></svg>
<svg style="position:absolute;left:838.6px;top:740.3000000000001px;" width="20" height="22" viewBox="0 0 20 22" fill="none"><circle cx="12.7" cy="6.8" r="4.2" stroke="#c4c4c4" stroke-width="1.6"/><path d="M9.8 9.9 L7 13" stroke="#c4c4c4" stroke-width="1.6"/><rect x="3" y="13" width="5.6" height="5.6" transform="rotate(45 5.8 15.8)" stroke="#c4c4c4" stroke-width="1.6"/></svg>
<svg style="position:absolute;left:422.4px;top:794.6px;" width="61.6" height="61.6" viewBox="0 0 100 100" fill="none"><defs><clipPath id="cr5"><circle cx="50" cy="50" r="50"/></clipPath><radialGradient id="gr5" cx=".45" cy=".42" r=".65"><stop offset="0" stop-color="#e8c5b2"/><stop offset=".6" stop-color="#e3b9a2"/><stop offset="1" stop-color="#b1907e"/></radialGradient><linearGradient id="br5" x1="0" y1="0" x2="1" y2="1"><stop offset="0" stop-color="#dadadc"/><stop offset="1" stop-color="#b8b8b9"/></linearGradient></defs><g clip-path="url(#cr5)"><rect width="100" height="100" fill="url(#br5)"/><g transform="translate(50 60) scale(1.2) translate(-50 -52)"><path d="M12 70 C6 30 24 8 50 8 C76 8 94 30 88 70 C86 80 76 82 72 76 L28 76 C24 82 14 80 12 70Z" fill="#a8917a"/><path d="M4 104 C6 84 26 80 50 80 C74 80 94 84 96 104Z" fill="#ebe6e0"/><path d="M38 66 H62 V84 C56 90 44 90 38 84Z" fill="#b1907e"/><ellipse cx="26" cy="52" rx="3.5" ry="6" fill="#b1907e"/><ellipse cx="74" cy="52" rx="3.5" ry="6" fill="#b1907e"/><path d="M26 46 C26 24 74 24 74 46 C74 66 64 82 50 82 C36 82 26 66 26 46Z" fill="url(#gr5)"/><path d="M24 56 C18 26 36 12 50 12 C64 12 82 26 76 56 C74 38 66 28 56 25 C46 30 30 34 24 56Z" fill="#a8917a"/><path d="M34 43 Q40 40 45 42.5 M55 42.5 Q60 40 66 43" stroke="#8a6f58" stroke-width="1.8" fill="none" stroke-linecap="round"/><ellipse cx="40" cy="48" rx="3" ry="1.9" fill="#2a1c16"/><ellipse cx="60" cy="48" rx="3" ry="1.9" fill="#2a1c16"/><path d="M47 58 Q50 60.5 53 58" stroke="#b1907e" stroke-width="1.6" fill="none" stroke-linecap="round"/><path d="M39 64.5 Q50 68 61 64.5 Q50 76 39 64.5Z" fill="#fbf7f4"/><path d="M39 64.5 Q50 68 61 64.5" stroke="#8c7264" stroke-width="1.2" fill="none"/><path d="M39 64.5 Q50 77 61 64.5" stroke="#9e8171" stroke-width="1.5" fill="none"/></g></g></svg>
<div style="position:absolute;left:461.0px;top:828.6px;width:31px;height:31px;border-radius:50%;background:#171717;"></div>
<div style="position:absolute;left:464.7px;top:832.3000000000001px;width:23.6px;height:23.6px;border-radius:50%;background:#22a67b;"></div>
<span class="t" style="left:507.6px;top:792.9px;font-size:30.3px;color:#f7f7f7;transform:scaleX(0.9739);transform-origin:0 50%;">Kristin Stone</span>
<span class="t" style="left:507.6px;top:834.3px;font-size:26.7px;color:#c2c2c2;">Design sync up meeting note</span>
<span class="t" style="left:919.0px;top:794.1px;font-size:26.7px;color:#fff;font-weight:700;transform:scaleX(0.9243);transform-origin:100% 50%;">11/07</span>
<span class="t" style="left:897.6px;top:834.5px;font-size:26.5px;color:#c6c6c6;transform:scaleX(0.9516);transform-origin:100% 50%;">10m 2s</span>
<svg style="position:absolute;left:871.1px;top:835.4px;" width="18" height="23" viewBox="0 0 18 23" fill="none"><rect x="1.7" y="9.8" width="14.6" height="11" rx="2" stroke="#c0c0c0" stroke-width="1.7"/><path d="M4.6 9.8 V6.4 C4.6 3.8 6.5 2 9 2 C11.5 2 13.4 3.8 13.4 6.4 V9.8" stroke="#c0c0c0" stroke-width="1.7"/></svg>
<svg style="position:absolute;left:422.4px;top:891.0px;" width="61.6" height="61.6" viewBox="0 0 100 100" fill="none"><defs><clipPath id="cr6"><circle cx="50" cy="50" r="50"/></clipPath><radialGradient id="gr6" cx=".45" cy=".42" r=".65"><stop offset="0" stop-color="#d2a68c"/><stop offset=".6" stop-color="#c99373"/><stop offset="1" stop-color="#9c7259"/></radialGradient><linearGradient id="br6" x1="0" y1="0" x2="1" y2="1"><stop offset="0" stop-color="#dddcda"/><stop offset="1" stop-color="#bab9b7"/></linearGradient></defs><g clip-path="url(#cr6)"><rect width="100" height="100" fill="url(#br6)"/><g transform="translate(50 60) scale(1.2) translate(-50 -52)"><ellipse cx="50" cy="38" rx="29" ry="30" fill="#2a1f1b"/><path d="M4 104 C6 84 26 80 50 80 C74 80 94 84 96 104Z" fill="#ece6de"/><path d="M38 66 H62 V84 C56 90 44 90 38 84Z" fill="#9c7259"/><ellipse cx="26" cy="52" rx="3.5" ry="6" fill="#9c7259"/><ellipse cx="74" cy="52" rx="3.5" ry="6" fill="#9c7259"/><path d="M26 46 C26 24 74 24 74 46 C74 66 64 82 50 82 C36 82 26 66 26 46Z" fill="url(#gr6)"/><path d="M25 48 C21 22 38 12 50 12 C62 12 79 22 75 48 C72 32 62 26 50 26 C38 26 28 32 25 48Z" fill="#2a1f1b"/><path d="M34 43 Q40 40 45 42.5 M55 42.5 Q60 40 66 43" stroke="#251b18" stroke-width="1.8" fill="none" stroke-linecap="round"/><ellipse cx="40" cy="48" rx="3" ry="1.9" fill="#2a1c16"/><ellipse cx="60" cy="48" rx="3" ry="1.9" fill="#2a1c16"/><path d="M47 58 Q50 60.5 53 58" stroke="#9c7259" stroke-width="1.6" fill="none" stroke-linecap="round"/><path d="M39 64.5 Q50 68 61 64.5 Q50 76 39 64.5Z" fill="#fbf7f4"/><path d="M39 64.5 Q50 68 61 64.5" stroke="#7c5b47" stroke-width="1.2" fill="none"/><path d="M39 64.5 Q50 77 61 64.5" stroke="#8c6650" stroke-width="1.5" fill="none"/></g></g></svg>
<div style="position:absolute;left:461.5px;top:928.1000000000001px;width:30px;height:24.8px;border-radius:7px;background:#121212;"></div>
<svg style="position:absolute;left:464.7px;top:931.3000000000001px;" width="23.6" height="18.4" viewBox="0 0 23.6 18.4" fill="none"><rect x="0" y="0" width="23.6" height="18.4" rx="4" fill="#ef5272"/><path d="M11.8 15 V6 M7.2 9.4 L11.8 4.4 L16.4 9.4" stroke="#141414" stroke-width="3" stroke-linecap="round" stroke-linejoin="round"/></svg>
<span class="t" style="left:507.6px;top:889.9px;font-size:30.3px;color:#f7f7f7;transform:scaleX(0.9717);transform-origin:0 50%;">Marise Torres</span>
<span class="t" style="left:507.6px;top:931.3px;font-size:26.7px;color:#c2c2c2;transform:scaleX(0.9721);transform-origin:0 50%;">Test result review high...</span>
<span class="t" style="left:919.0px;top:891.1px;font-size:26.7px;color:#fff;font-weight:700;transform:scaleX(0.9412);transform-origin:100% 50%;">11/06</span>
<span class="t" style="left:897.6px;top:931.5px;font-size:26.5px;color:#c6c6c6;transform:scaleX(0.9516);transform-origin:100% 50%;">10m 2s</span>
<svg style="position:absolute;left:871.1px;top:932.4000000000001px;" width="18" height="23" viewBox="0 0 18 23" fill="none"><rect x="1.7" y="9.8" width="14.6" height="11" rx="2" stroke="#c0c0c0" stroke-width="1.7"/><path d="M4.6 9.8 V6.4 C4.6 3.8 6.5 2 9 2 C11.5 2 13.4 3.8 13.4 6.4 V9.8" stroke="#c0c0c0" stroke-width="1.7"/></svg>
<svg style="position:absolute;left:838.6px;top:933.7000000000002px;" width="20" height="22" viewBox="0 0 20 22" fill="none"><circle cx="12.7" cy="6.8" r="4.2" stroke="#c4c4c4" stroke-width="1.6"/><path d="M9.8 9.9 L7 13" stroke="#c4c4c4" stroke-width="1.6"/><rect x="3" y="13" width="5.6" height="5.6" transform="rotate(45 5.8 15.8)" stroke="#c4c4c4" stroke-width="1.6"/></svg>
<svg style="position:absolute;left:806.9px;top:933.4000000000001px;" width="22" height="22" viewBox="0 0 22 22" fill="none"><circle cx="11" cy="11" r="9.5" stroke="#f0808c" stroke-width="1.7"/><path d="M11 6.2 V12.6" stroke="#f0808c" stroke-width="2" stroke-linecap="round"/><circle cx="11" cy="15.8" r="1.25" fill="#f0808c"/></svg>
<div style="position:absolute;left:1001.9px;top:911.3000000000002px;width:20.8px;height:20.8px;border-radius:50%;background:#64b4fa;"></div>
<svg style="position:absolute;left:422.4px;top:987.4px;" width="61.6" height="61.6" viewBox="0 0 100 100" fill="none"><defs><clipPath id="cr7"><circle cx="50" cy="50" r="50"/></clipPath><radialGradient id="gr7" cx=".45" cy=".42" r=".65"><stop offset="0" stop-color="#b68569"/><stop offset=".6" stop-color="#a66b49"/><stop offset="1" stop-color="#815338"/></radialGradient><linearGradient id="br7" x1="0" y1="0" x2="1" y2="1"><stop offset="0" stop-color="#e9e9eb"/><stop offset="1" stop-color="#c5c5c8"/></linearGradient></defs><g clip-path="url(#cr7)"><rect width="100" height="100" fill="url(#br7)"/><g transform="translate(50 60) scale(1.2) translate(-50 -52)"><ellipse cx="50" cy="41" rx="37" ry="35" fill="#231c19"/><circle cx="19" cy="58" r="11" fill="#231c19"/><circle cx="81" cy="58" r="11" fill="#231c19"/><path d="M4 104 C6 84 26 80 50 80 C74 80 94 84 96 104Z" fill="#e9773c"/><path d="M38 66 H62 V84 C56 90 44 90 38 84Z" fill="#815338"/><ellipse cx="26" cy="52" rx="3.5" ry="6" fill="#815338"/><ellipse cx="74" cy="52" rx="3.5" ry="6" fill="#815338"/><path d="M26 46 C26 24 74 24 74 46 C74 66 64 82 50 82 C36 82 26 66 26 46Z" fill="url(#gr7)"/><path d="M25 48 C22 24 38 16 50 16 C62 16 78 24 75 48 C72 34 62 27 50 27 C38 27 28 34 25 48Z" fill="#231c19"/><path d="M34 43 Q40 40 45 42.5 M55 42.5 Q60 40 66 43" stroke="#1f1916" stroke-width="1.8" fill="none" stroke-linecap="round"/><ellipse cx="40" cy="48" rx="3" ry="1.9" fill="#2a1c16"/><ellipse cx="60" cy="48" rx="3" ry="1.9" fill="#2a1c16"/><path d="M47 58 Q50 60.5 53 58" stroke="#815338" stroke-width="1.6" fill="none" stroke-linecap="round"/><path d="M39 64.5 Q50 68 61 64.5 Q50 76 39 64.5Z" fill="#fbf7f4"/><path d="M39 64.5 Q50 68 61 64.5" stroke="#66422d" stroke-width="1.2" fill="none"/><path d="M39 64.5 Q50 77 61 64.5" stroke="#744a33" stroke-width="1.5" fill="none"/></g></g></svg>
<div style="position:absolute;left:461.9px;top:1024.9px;width:30px;height:24.5px;border-radius:7px;background:#121212;"></div>
<svg style="position:absolute;left:464.7px;top:1027.7px;" width="23.6" height="18.4" viewBox="0 0 23.6 18.4" fill="none"><rect x="0" y="0" width="16.6" height="18.4" rx="4" fill="#f3701f"/><path d="M15.5 6.2 L21.6 2.2 C22.4 1.7 23.4 2.2 23.4 3.2 V15.2 C23.4 16.2 22.4 16.7 21.6 16.2 L15.5 12.2Z" fill="#f3701f"/></svg>
<span class="t" style="left:507.6px;top:1005.0px;font-size:30.3px;color:#f7f7f7;transform:scaleX(0.9674);transform-origin:0 50%;">Isabella Brennan</span>
<span class="t" style="left:919.0px;top:986.9px;font-size:26.7px;color:#fff;font-weight:700;transform:scaleX(0.9412);transform-origin:100% 50%;">11/06</span>
<span class="t" style="left:897.6px;top:1027.3px;font-size:26.5px;color:#c6c6c6;transform:scaleX(0.9516);transform-origin:100% 50%;">10m 2s</span>
<svg style="position:absolute;left:871.1px;top:1028.2px;" width="18" height="23" viewBox="0 0 18 23" fill="none"><rect x="1.7" y="9.8" width="14.6" height="11" rx="2" stroke="#c0c0c0" stroke-width="1.7"/><path d="M4.6 9.8 V6.4 C4.6 3.8 6.5 2 9 2 C11.5 2 13.4 3.8 13.4 6.4 V9.8" stroke="#c0c0c0" stroke-width="1.7"/></svg>
<svg style="position:absolute;left:422.4px;top:1083.8px;" width="61.6" height="61.6" viewBox="0 0 100 100" fill="none"><defs><clipPath id="cr8"><circle cx="50" cy="50" r="50"/></clipPath><radialGradient id="gr8" cx=".45" cy=".42" r=".65"><stop offset="0" stop-color="#b68569"/><stop offset=".6" stop-color="#a66b49"/><stop offset="1" stop-color="#815338"/></radialGradient><linearGradient id="br8" x1="0" y1="0" x2="1" y2="1"><stop offset="0" stop-color="#e9e9eb"/><stop offset="1" stop-color="#c5c5c8"/></linearGradient></defs><g clip-path="url(#cr8)"><rect width="100" height="100" fill="url(#br8)"/><g transform="translate(50 60) scale(1.2) translate(-50 -52)"><ellipse cx="50" cy="41" rx="37" ry="35" fill="#231c19"/><circle cx="19" cy="58" r="11" fill="#231c19"/><circle cx="81" cy="58" r="11" fill="#231c19"/><path d="M4 104 C6 84 26 80 50 80 C74 80 94 84 96 104Z" fill="#e9773c"/><path d="M38 66 H62 V84 C56 90 44 90 38 84Z" fill="#815338"/><ellipse cx="26" cy="52" rx="3.5" ry="6" fill="#815338"/><ellipse cx="74" cy="52" rx="3.5" ry="6" fill="#815338"/><path d="M26 46 C26 24 74 24 74 46 C74 66 64 82 50 82 C36 82 26 66 26 46Z" fill="url(#gr8)"/><path d="M25 48 C22 24 38 16 50 16 C62 16 78 24 75 48 C72 34 62 27 50 27 C38 27 28 34 25 48Z" fill="#231c19"/><path d="M34 43 Q40 40 45 42.5 M55 42.5 Q60 40 66 43" stroke="#1f1916" stroke-width="1.8" fill="none" stroke-linecap="round"/><ellipse cx="40" cy="48" rx="3" ry="1.9" fill="#2a1c16"/><ellipse cx="60" cy="48" rx="3" ry="1.9" fill="#2a1c16"/><path d="M47 58 Q50 60.5 53 58" stroke="#815338" stroke-width="1.6" fill="none" stroke-linecap="round"/><path d="M39 64.5 Q50 68 61 64.5 Q50 76 39 64.5Z" fill="#fbf7f4"/><path d="M39 64.5 Q50 68 61 64.5" stroke="#66422d" stroke-width="1.2" fill="none"/><path d="M39 64.5 Q50 77 61 64.5" stroke="#744a33" stroke-width="1.5" fill="none"/></g></g></svg>
<div style="position:absolute;left:461.9px;top:1121.3000000000002px;width:30px;height:24.5px;border-radius:7px;background:#121212;"></div>
<svg style="position:absolute;left:464.7px;top:1124.1000000000001px;" width="23.6" height="18.4" viewBox="0 0 23.6 18.4" fill="none"><rect x="0" y="0" width="16.6" height="18.4" rx="4" fill="#f3701f"/><path d="M15.5 6.2 L21.6 2.2 C22.4 1.7 23.4 2.2 23.4 3.2 V15.2 C23.4 16.2 22.4 16.7 21.6 16.2 L15.5 12.2Z" fill="#f3701f"/></svg>
<span class="t" style="left:507.6px;top:1101.4px;font-size:30.3px;color:#f7f7f7;font-weight:700;transform:scaleX(0.9815);transform-origin:0 50%;">Isabella Brennan</span>
<span class="t" style="left:919.0px;top:1083.3px;font-size:26.7px;color:#fff;font-weight:700;transform:scaleX(0.9412);transform-origin:100% 50%;">11/06</span>
<span class="t" style="left:897.6px;top:1123.7px;font-size:26.5px;color:#c6c6c6;transform:scaleX(0.9516);transform-origin:100% 50%;">10m 2s</span>
<svg style="position:absolute;left:871.1px;top:1124.6000000000001px;" width="18" height="23" viewBox="0 0 18 23" fill="none"><rect x="1.7" y="9.8" width="14.6" height="11" rx="2" stroke="#c0c0c0" stroke-width="1.7"/><path d="M4.6 9.8 V6.4 C4.6 3.8 6.5 2 9 2 C11.5 2 13.4 3.8 13.4 6.4 V9.8" stroke="#c0c0c0" stroke-width="1.7"/></svg>
<svg style="position:absolute;left:837.6px;top:1125.6000000000001px;" width="22" height="22" viewBox="0 0 22 22" fill="none"><circle cx="11" cy="11" r="9.5" stroke="#f0808c" stroke-width="1.7"/><path d="M11 6.2 V12.6" stroke="#f0808c" stroke-width="2" stroke-linecap="round"/><circle cx="11" cy="15.8" r="1.25" fill="#f0808c"/></svg>
<div style="position:absolute;left:1001.9px;top:1104.1000000000001px;width:20.8px;height:20.8px;border-radius:50%;background:#64b4fa;"></div>
<svg style="position:absolute;left:422.4px;top:1180.2px;" width="61.6" height="61.6" viewBox="0 0 100 100" fill="none"><defs><clipPath id="cr9"><circle cx="50" cy="50" r="50"/></clipPath><radialGradient id="gr9" cx=".45" cy=".42" r=".65"><stop offset="0" stop-color="#d6a78d"/><stop offset=".6" stop-color="#cd9475"/><stop offset="1" stop-color="#9f735b"/></radialGradient><linearGradient id="br9" x1="0" y1="0" x2="1" y2="1"><stop offset="0" stop-color="#b39987"/><stop offset="1" stop-color="#917866"/></linearGradient></defs><g clip-path="url(#cr9)"><rect width="100" height="100" fill="url(#br9)"/><path d="M0 20 L30 30 L34 100 L0 100Z" fill="#e9dde2"/><g transform="translate(50 60) scale(1.2) translate(-50 -52)"><ellipse cx="50" cy="38" rx="29" ry="30" fill="#1d1718"/><path d="M4 104 C6 84 26 80 50 80 C74 80 94 84 96 104Z" fill="#e6c4d8"/><path d="M38 66 H62 V84 C56 90 44 90 38 84Z" fill="#9f735b"/><ellipse cx="26" cy="52" rx="3.5" ry="6" fill="#9f735b"/><ellipse cx="74" cy="52" rx="3.5" ry="6" fill="#9f735b"/><path d="M26 46 C26 24 74 24 74 46 C74 66 64 82 50 82 C36 82 26 66 26 46Z" fill="url(#gr9)"/><path d="M25 48 C21 22 38 12 50 12 C62 12 79 22 75 48 C72 32 62 26 50 26 C38 26 28 32 25 48Z" fill="#1d1718"/><path d="M34 43 Q40 40 45 42.5 M55 42.5 Q60 40 66 43" stroke="#1a1415" stroke-width="1.8" fill="none" stroke-linecap="round"/><ellipse cx="40" cy="48" rx="3" ry="1.9" fill="#2a1c16"/><ellipse cx="60" cy="48" rx="3" ry="1.9" fill="#2a1c16"/><path d="M47 58 Q50 60.5 53 58" stroke="#9f735b" stroke-width="1.6" fill="none" stroke-linecap="round"/><path d="M41 66 Q50 70.5 59 66" stroke="#7b5846" stroke-width="2.2" fill="none" stroke-linecap="round"/></g></g></svg>
<div style="position:absolute;left:461.0px;top:1214.2px;width:31px;height:31px;border-radius:50%;background:#121212;"></div>
<div style="position:absolute;left:464.9px;top:1218.1000000000001px;width:23.2px;height:23.2px;border-radius:50%;background:#8e8e8e;"></div>
<svg style="position:absolute;left:464.9px;top:1218.1000000000001px;" width="23.2" height="23.2" viewBox="0 0 23.2 23.2" fill="none"><path d="M11.2 4.6 V12 L16.2 16.4" stroke="#1c1c1c" stroke-width="2.6" stroke-linecap="round" stroke-linejoin="round"/></svg>
<span class="t" style="left:507.6px;top:1197.8px;font-size:30.3px;color:#f7f7f7;font-weight:700;transform:scaleX(0.9890);transform-origin:0 50%;">Sofia Gomez</span>
<span class="t" style="left:917.5px;top:1179.7px;font-size:26.7px;color:#fff;font-weight:700;transform:scaleX(0.9878);transform-origin:100% 50%;">10/24</span>
<span class="t" style="left:897.6px;top:1220.1px;font-size:26.5px;color:#c6c6c6;transform:scaleX(0.9516);transform-origin:100% 50%;">10m 2s</span>
<svg style="position:absolute;left:871.1px;top:1221.0px;" width="18" height="23" viewBox="0 0 18 23" fill="none"><rect x="1.7" y="9.8" width="14.6" height="11" rx="2" stroke="#c0c0c0" stroke-width="1.7"/><path d="M4.6 9.8 V6.4 C4.6 3.8 6.5 2 9 2 C11.5 2 13.4 3.8 13.4 6.4 V9.8" stroke="#c0c0c0" stroke-width="1.7"/></svg>
<div style="position:absolute;left:1001.9px;top:1200.5px;width:20.8px;height:20.8px;border-radius:50%;background:#64b4fa;"></div>
<svg style="position:absolute;left:422.4px;top:1276.6px;" width="61.6" height="61.6" viewBox="0 0 100 100" fill="none"><defs><clipPath id="cr10"><circle cx="50" cy="50" r="50"/></clipPath><radialGradient id="gr10" cx=".45" cy=".42" r=".65"><stop offset="0" stop-color="#dfb598"/><stop offset=".6" stop-color="#d9a582"/><stop offset="1" stop-color="#a98065"/></radialGradient><linearGradient id="br10" x1="0" y1="0" x2="1" y2="1"><stop offset="0" stop-color="#ededed"/><stop offset="1" stop-color="#cacaca"/></linearGradient></defs><g clip-path="url(#cr10)"><rect width="100" height="100" fill="url(#br10)"/><g transform="translate(50 60) scale(1.2) translate(-50 -52)"><ellipse cx="50" cy="41" rx="37" ry="35" fill="#231a15"/><circle cx="19" cy="58" r="11" fill="#231a15"/><circle cx="81" cy="58" r="11" fill="#231a15"/><path d="M4 104 C6 84 26 80 50 80 C74 80 94 84 96 104Z" fill="#2f3d55"/><path d="M38 66 H62 V84 C56 90 44 90 38 84Z" fill="#a98065"/><ellipse cx="26" cy="52" rx="3.5" ry="6" fill="#a98065"/><ellipse cx="74" cy="52" rx="3.5" ry="6" fill="#a98065"/><path d="M26 46 C26 24 74 24 74 46 C74 66 64 82 50 82 C36 82 26 66 26 46Z" fill="url(#gr10)"/><path d="M25 48 C22 24 38 16 50 16 C62 16 78 24 75 48 C72 34 62 27 50 27 C38 27 28 34 25 48Z" fill="#231a15"/><path d="M34 43 Q40 40 45 42.5 M55 42.5 Q60 40 66 43" stroke="#1f1712" stroke-width="1.8" fill="none" stroke-linecap="round"/><ellipse cx="40" cy="48" rx="3" ry="1.9" fill="#2a1c16"/><ellipse cx="60" cy="48" rx="3" ry="1.9" fill="#2a1c16"/><path d="M47 58 Q50 60.5 53 58" stroke="#a98065" stroke-width="1.6" fill="none" stroke-linecap="round"/><path d="M39 64.5 Q50 68 61 64.5 Q50 76 39 64.5Z" fill="#fbf7f4"/><path d="M39 64.5 Q50 68 61 64.5" stroke="#866650" stroke-width="1.2" fill="none"/><path d="M39 64.5 Q50 77 61 64.5" stroke="#97735b" stroke-width="1.5" fill="none"/></g></g></svg>
<div style="position:absolute;left:461.0px;top:1310.6px;width:31px;height:31px;border-radius:50%;background:#121212;"></div>
<div style="position:absolute;left:464.7px;top:1314.3px;width:23.6px;height:23.6px;border-radius:50%;background:#22a67b;"></div>
<span class="t" style="left:507.6px;top:1274.9px;font-size:30.3px;color:#f7f7f7;transform:scaleX(0.9586);transform-origin:0 50%;">Austen Jones</span>
<span class="t" style="left:507.6px;top:1316.3px;font-size:26.7px;color:#c2c2c2;transform:scaleX(0.9503);transform-origin:0 50%;">Upcoming product spotl...</span>
<span class="t" style="left:917.5px;top:1276.1px;font-size:26.7px;color:#fff;font-weight:700;transform:scaleX(0.9878);transform-origin:100% 50%;">10/23</span>
<span class="t" style="left:897.6px;top:1316.5px;font-size:26.5px;color:#c6c6c6;transform:scaleX(0.9516);transform-origin:100% 50%;">10m 2s</span>
<svg style="position:absolute;left:871.1px;top:1317.3999999999999px;" width="18" height="23" viewBox="0 0 18 23" fill="none"><rect x="1.7" y="9.8" width="14.6" height="11" rx="2" stroke="#c0c0c0" stroke-width="1.7"/><path d="M4.6 9.8 V6.4 C4.6 3.8 6.5 2 9 2 C11.5 2 13.4 3.8 13.4 6.4 V9.8" stroke="#c0c0c0" stroke-width="1.7"/></svg>
<svg style="position:absolute;left:838.6px;top:1318.6999999999998px;" width="20" height="22" viewBox="0 0 20 22" fill="none"><circle cx="12.7" cy="6.8" r="4.2" stroke="#c4c4c4" stroke-width="1.6"/><path d="M9.8 9.9 L7 13" stroke="#c4c4c4" stroke-width="1.6"/><rect x="3" y="13" width="5.6" height="5.6" transform="rotate(45 5.8 15.8)" stroke="#c4c4c4" stroke-width="1.6"/></svg>
</div></div>
<div style="position:absolute;left:1093.5px;top:191px;width:1503.5px;height:1303px;border-radius:18px 0 0 0;background:linear-gradient(180deg,#3e3e3e 0%,#373737 18%,#2d2d2d 38%,#242424 55%,#1b1b1b 72%,#131313 90%,#0f0f0f 100%);"></div>
<svg style="position:absolute;left:1760.2px;top:398.6px;" width="169.8" height="169.8" viewBox="0 0 100 100" fill="none"><defs><clipPath id="cbig"><circle cx="50" cy="50" r="50"/></clipPath><radialGradient id="gbig" cx=".46" cy=".45" r=".62"><stop offset="0" stop-color="#ecbd9c"/><stop offset=".55" stop-color="#dda684"/><stop offset="1" stop-color="#b98063"/></radialGradient><linearGradient id="bbig" x1="0" y1="0" x2="1" y2="0"><stop offset="0" stop-color="#c4c0b9"/><stop offset=".45" stop-color="#d2cfca"/><stop offset="1" stop-color="#d9dcda"/></linearGradient></defs><g clip-path="url(#cbig)"><rect width="100" height="100" fill="url(#bbig)"/><rect x="21" y="58" width="8" height="42" fill="#e6e4e0"/><rect x="8.5" y="65" width="5.5" height="6" fill="#e3bf1c"/><rect x="0" y="42" width="7" height="30" fill="#a9a6a0"/><rect x="88" y="20" width="12" height="60" fill="#e4e7e6"/><ellipse cx="52" cy="37" rx="31.5" ry="33" fill="#2b2321"/><path d="M17 47 C13 18 34 2.5 53 2.5 C74 2.5 92 20 86 48" fill="none" stroke="#bdb8b5" stroke-width="4.6"/><rect x="11.5" y="37" width="11.5" height="24" rx="5" fill="#a7a29f"/><rect x="17" y="39" width="7" height="20" rx="3" fill="#8a8583"/><rect x="79.5" y="40" width="6" height="20" rx="3" fill="#8f8a88"/><path d="M18 104 C20 90 30 85 42 84 L70 86 C84 88 90 94 92 104Z" fill="#e2a5a6"/><path d="M34 80 H64 V100 H34Z" fill="#c48b6c"/><path d="M22 52 C22 32 34 24 48 24 C63 24 75.5 32 75.5 52 C75.5 74 62 94.5 48.5 94.5 C35 94.5 22 74 22 52Z" fill="url(#gbig)"/><path d="M21.5 52 C18 24 36 7 52 7 C69 7 83 22 77.5 52 C76.5 41 71 31 63 26.5 C57 23.5 51 27 49 24.5 C45 23 40 24 36 27 C28 32 23.5 41 21.5 52Z" fill="#2b2321"/><path d="M29 42.5 Q36 38.5 43 41.5 M54 41.5 Q61 38.8 68 43" stroke="#3a2a22" stroke-width="2" fill="none" stroke-linecap="round"/><path d="M31 48 Q36.5 44.6 42 48 Q36.5 50 31 48Z" fill="#2a1b15"/><path d="M55 48.5 Q60.5 45 66 48.5 Q60.5 50.6 55 48.5Z" fill="#2a1b15"/><path d="M43 60.5 Q48 64 53.5 60.5" stroke="#b37a5c" stroke-width="1.8" fill="none" stroke-linecap="round"/><path d="M47 47 Q45 55 44 59" stroke="#cf9776" stroke-width="1.4" fill="none"/><path d="M35.5 60 Q33 66 35.5 72 M61.5 60 Q64 66 61.5 72" stroke="#c08a6b" stroke-width="1.3" fill="none" stroke-linecap="round"/><path d="M36.5 66.5 Q48 69.5 60 66.5 Q57 78.5 48 78.5 Q39.5 78.5 36.5 66.5Z" fill="#b9646a"/><path d="M38.5 67.4 Q48 70 58 67.4 Q55.5 74.5 48 74.5 Q41 74.5 38.5 67.4Z" fill="#fbf8f5"/></g></svg>
<div style="position:absolute;left:1868.5px;top:509.1px;width:61px;height:61px;border-radius:50%;background:#303030;"></div>
<div style="position:absolute;left:1877.5px;top:518.1px;width:43px;height:43px;border-radius:50%;background:#22a67b;"></div>
<span class="t" style="left:1651.5px;top:629.3px;font-size:49.5px;color:#fafafa;font-weight:700;transform:scaleX(0.9924);transform-origin:50% 50%;">Emily Nakagawa</span>
<svg style="position:absolute;left:1683.3px;top:711.1px;" width="18" height="23" viewBox="0 0 18 23" fill="none"><rect x="1.7" y="9.8" width="14.6" height="11" rx="2" stroke="#c4c4c4" stroke-width="1.7"/><path d="M4.6 9.8 V6.4 C4.6 3.8 6.5 2 9 2 C11.5 2 13.4 3.8 13.4 6.4 V9.8" stroke="#c4c4c4" stroke-width="1.7"/></svg>
<span class="t" style="left:1713.0px;top:710.0px;font-size:26.5px;color:#c6c6c6;transform:scaleX(1.0103);transform-origin:0 50%;">Mobile: +1 888 555 4756</span>
<span class="t" style="left:1732.8px;top:799.5px;font-size:26.8px;color:#c6c6c6;transform:scaleX(0.9626);transform-origin:50% 50%;">Yesterday 8:12 AM</span>
<div style="position:absolute;left:1421.3px;top:896.8px;width:60.8px;height:60.8px;box-sizing:border-box;border:2px solid #5c5c5c;border-radius:50%;"></div>
<svg style="position:absolute;left:1439px;top:912px;" width="30" height="30" viewBox="0 0 30 30" fill="none"><path d="M4.5 5 C4.5 3.6 6 2.8 7.2 3.5 L22.6 13.2 C23.7 13.9 23.7 15.5 22.6 16.2 L7.2 25.9 C6 26.6 4.5 25.8 4.5 24.4 Z" stroke="#f2f2f2" stroke-width="2.1" stroke-linejoin="round"/></svg>
<div style="position:absolute;left:1513px;top:925px;width:679px;height:4px;border-radius:2px;background:#474747;"></div>
<div style="position:absolute;left:1497.5px;top:911.5px;width:31px;height:31px;box-sizing:border-box;border-radius:50%;background:#000;border:1.6px solid #5a5a5a;"></div>
<span class="t" style="left:1498.5px;top:960.3px;font-size:31.5px;color:#f2f2f2;transform:scaleX(0.9338);transform-origin:0 50%;">00:00:00</span>
<span class="t" style="left:2069.4px;top:960.3px;font-size:31.5px;color:#f2f2f2;transform:scaleX(0.9338);transform-origin:100% 50%;">00:00:12</span>
<div style="position:absolute;left:1632.5px;top:1058.1000000000001px;width:100.6px;height:100.6px;border-radius:50%;background:#1f8a66;"></div>
<svg style="position:absolute;left:1661.4px;top:1086.2px;overflow:visible;" width="44.0" height="44.5" viewBox="0 0 44.0 44.5" fill="none"><g transform="translate(-4.17,-2.47) scale(0.9692,0.9509)"><path d="M12.2 2.8 C8 2.8 3.6 8 4.3 14 C5.5 22 8 27 11.3 30.5 C15 35 19 39.5 24.4 42.8 C29 46 35 49.6 40.1 49.4 C45 49.2 51 44 49.7 39.3 C49 36 42 30.5 38.4 29.7 C35.5 29 32.5 34 29.6 35.8 C26.5 36.5 21 32 19.1 28.8 C17 25.5 14.5 22.5 15.6 20 C17 17 23 15.5 23.5 12.2 C24 9 17 2.8 12.2 2.8 Z" stroke="#f5f5f5" stroke-width="2.40" stroke-linejoin="round"/></g></svg>
<div style="position:absolute;left:1794.7px;top:1058.1000000000001px;width:100.6px;height:100.6px;border-radius:50%;background:#1f8a66;"></div>
<svg style="position:absolute;left:1819px;top:1082.4px;" width="52" height="52" viewBox="0 0 52 52" fill="none"><rect x="3.6" y="9" width="33" height="34" rx="6.5" stroke="#f5f5f5" stroke-width="2.3"/><path d="M36.6 21.5 L46.6 16.2 C47.4 15.8 48.3 16.4 48.3 17.3 V34.7 C48.3 35.6 47.4 36.2 46.6 35.8 L36.6 30.5" stroke="#f5f5f5" stroke-width="2.3" stroke-linejoin="round"/></svg>
<div style="position:absolute;left:1956.7px;top:1058.1000000000001px;width:100.6px;height:100.6px;box-sizing:border-box;border:2px solid #5a5a5a;border-radius:50%;"></div>
<svg style="position:absolute;left:1980px;top:1081.4px;" width="54" height="54" viewBox="0 0 54 54" fill="none"><path d="M49 27 A22 22 0 1 1 36.5 7.2" stroke="#f5f5f5" stroke-width="3" stroke-linecap="round"/><path d="M36.6 14.6 H47.6 V3.6" stroke="#f5f5f5" stroke-width="3" stroke-linecap="round" stroke-linejoin="round"/></svg>
<span class="t" style="left:1648.7px;top:1183.7px;font-size:26.3px;color:#f5f5f5;transform:scaleX(1.0406);transform-origin:50% 50%;">Audio</span>
<span class="t" style="left:1811.6px;top:1183.7px;font-size:26.3px;color:#f5f5f5;transform:scaleX(1.0255);transform-origin:50% 50%;">Video</span>
<span class="t" style="left:1957.0px;top:1183.7px;font-size:26.3px;color:#f5f5f5;transform:scaleX(0.9496);transform-origin:50% 50%;">Recover</span>
<div style="position:absolute;left:960.4px;top:355.4px;width:533.4px;height:415.2px;box-sizing:border-box;border-radius:21px;background:#000;border:1.5px solid #3a3a3a;box-shadow:0 8px 24px rgba(0,0,0,.45);"></div>
<div style="position:absolute;left:975px;top:370.1px;width:505.3px;height:77px;border-radius:18px;background:linear-gradient(180deg,#2e97ea 0%,#3a8fe8 30%,#7467e3 70%,#8b5be0 100%);"></div>
<div style="position:absolute;left:984px;top:379.4px;width:487.3px;height:58.6px;border-radius:9px;background:#000;"></div>
<span class="t" style="left:999.0px;top:397.5px;font-size:36px;color:#f7f7f7;transform:scaleX(0.9527);transform-origin:0 50%;">Play voice message</span>
<span class="t" style="left:999.0px;top:474.1px;font-size:36px;color:#f7f7f7;transform:scaleX(1.0090);transform-origin:0 50%;">Audio call</span>
<span class="t" style="left:999.0px;top:550.7px;font-size:36px;color:#f7f7f7;">Video call</span>
<span class="t" style="left:999.0px;top:627.2px;font-size:36px;color:#f7f7f7;transform:scaleX(0.9802);transform-origin:0 50%;">Delete</span>
<span class="t" style="left:999.0px;top:703.8px;font-size:36px;color:#f7f7f7;transform:scaleX(0.9734);transform-origin:0 50%;">Mark as read</span>
<svg style="position:absolute;left:870px;top:360px;" width="60" height="84" viewBox="0 0 60 84" fill="none"><path d="M9.5 10.6 L9.5 65 L19.8 55.4 L28.6 73.6 L40.2 67.6 L31.6 50.6 L47.6 50.6 Z" fill="#000" stroke="#fff" stroke-width="2.8" stroke-linejoin="miter"/></svg>
</div></body></html>
